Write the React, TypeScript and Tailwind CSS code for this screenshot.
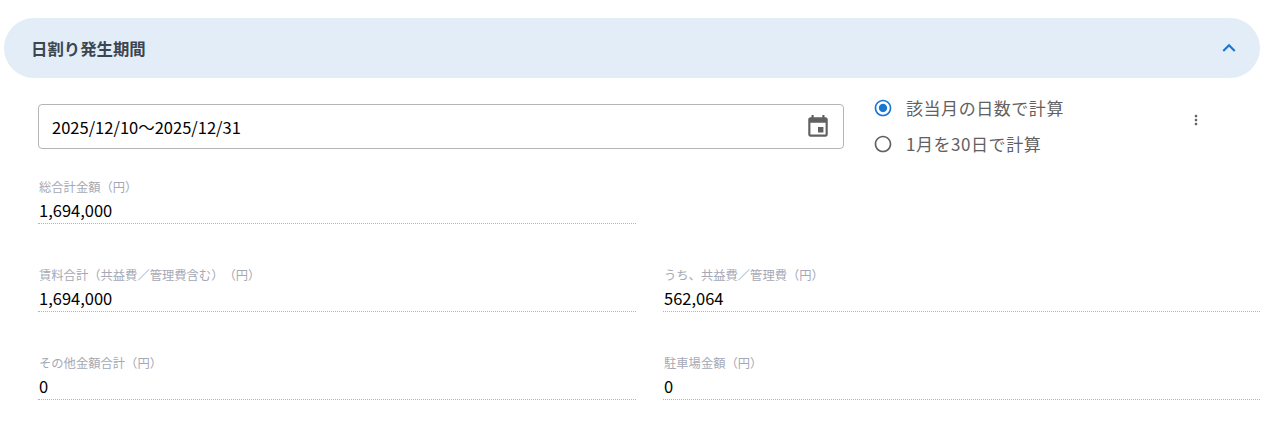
const FONT = "font-['Noto_Sans_CJK_JP','Noto_Sans',sans-serif]";

function Field({ label, value }: { label: string; value: string }) {
    return (
        <div className="h-[88px]">
            <div className="pl-px text-[12.3px] leading-[16px] text-[#a6a9b5] whitespace-nowrap [text-spacing-trim:space-all]">{label}</div>
            <div className="mt-[2px] h-[26px] pl-px text-[16.5px] leading-[26px] text-black border-b border-dotted border-[#b4b4b4] box-content">
                {value}
            </div>
        </div>
    );
}

function Radio({ checked, label }: { checked?: boolean; label: string }) {
    return (
        <label className="flex items-center gap-[13px] h-[36px]">
            {checked ? (
                <svg width="20" height="20" viewBox="0 0 24 24" fill="#1976d2">
                    <path d="M12 7c-2.76 0-5 2.24-5 5s2.24 5 5 5 5-2.24 5-5-2.24-5-5-5zm0-5C6.48 2 2 6.48 2 12s4.48 10 10 10 10-4.48 10-10S17.52 2 12 2zm0 18c-4.42 0-8-3.58-8-8s3.58-8 8-8 8 3.58 8 8-3.58 8-8 8z" />
                </svg>
            ) : (
                <svg width="20" height="20" viewBox="0 0 24 24" fill="#616161">
                    <path d="M12 2C6.48 2 2 6.48 2 12s4.48 10 10 10 10-4.48 10-10S17.52 2 12 2zm0 18c-4.42 0-8-3.58-8-8s3.58-8 8-8 8 3.58 8 8-3.58 8-8 8z" />
                </svg>
            )}
            <span className="text-[17px] tracking-[0.55px] text-[#616161] whitespace-nowrap">{label}</span>
        </label>
    );
}

export default function App() {
    return (
        <div className={`${FONT} w-[1280px] h-[428px] bg-white pt-[18px] pl-[4px] pr-[20px] overflow-hidden`}>
            {/* accordion header */}
            <div className="h-[60px] rounded-[30px] bg-[#e3edf8] flex items-center justify-between pl-[27px] pr-[18px]">
                <span className="text-[16.4px] font-bold text-[#3c4650]">日割り発生期間</span>
                <svg width="26" height="26" viewBox="0 0 24 24" fill="#1976d2">
                    <path d="M7.41 15.41 12 10.83l4.59 4.58L18 14l-6-6-6 6z" />
                </svg>
            </div>

            <div className="pl-[34px]">
                <div className="flex mt-[11px] h-[76px]">
                    {/* date range input */}
                    <div className="mt-[15px] w-[806px] h-[45px] rounded-[4px] border border-[#b5b5b5] flex items-center justify-between pl-[13px] pr-[12px]">
                        <span className="pt-px text-[16.5px] text-black">2025/12/10～2025/12/31</span>
                        <svg width="26" height="26" viewBox="0 0 24 24" fill="#616161">
                            <path d="M17 12h-5v5h5v-5zM16 1v2H8V1H6v2H5c-1.11 0-1.99.9-1.99 2L3 19c0 1.1.89 2 2 2h14c1.1 0 2-.9 2-2V5c0-1.1-.9-2-2-2h-1V1h-2zm3 18H5V8h14v11z" />
                        </svg>
                    </div>
                    <div className="ml-[29px] w-[298px] flex flex-col pt-px">
                        <Radio checked label="該当月の日数で計算" />
                        <Radio label="1月を30日で計算" />
                    </div>
                    <svg className="mt-[23px] ml-[17px]" width="16" height="16" viewBox="0 0 24 24" fill="#616161">
                        <path d="M12 8c1.1 0 2-.9 2-2s-.9-2-2-2-2 .9-2 2 .9 2 2 2zm0 2c-1.1 0-2 .9-2 2s.9 2 2 2 2-.9 2-2-.9-2-2-2zm0 6c-1.1 0-2 .9-2 2s.9 2 2 2 2-.9 2-2-.9-2-2-2z" />
                    </svg>
                </div>

                <div className="grid grid-cols-[598px_597px] gap-x-[27px] mt-[14px]">
                    <Field label="総合計金額（円）" value="1,694,000" />
                    <div />
                    <Field label="賃料合計（共益費／管理費含む）（円）" value="1,694,000" />
                    <Field label="うち、共益費／管理費（円）" value="562,064" />
                    <Field label="その他金額合計（円）" value="0" />
                    <Field label="駐車場金額（円）" value="0" />
                </div>
            </div>
        </div>
    );
}
